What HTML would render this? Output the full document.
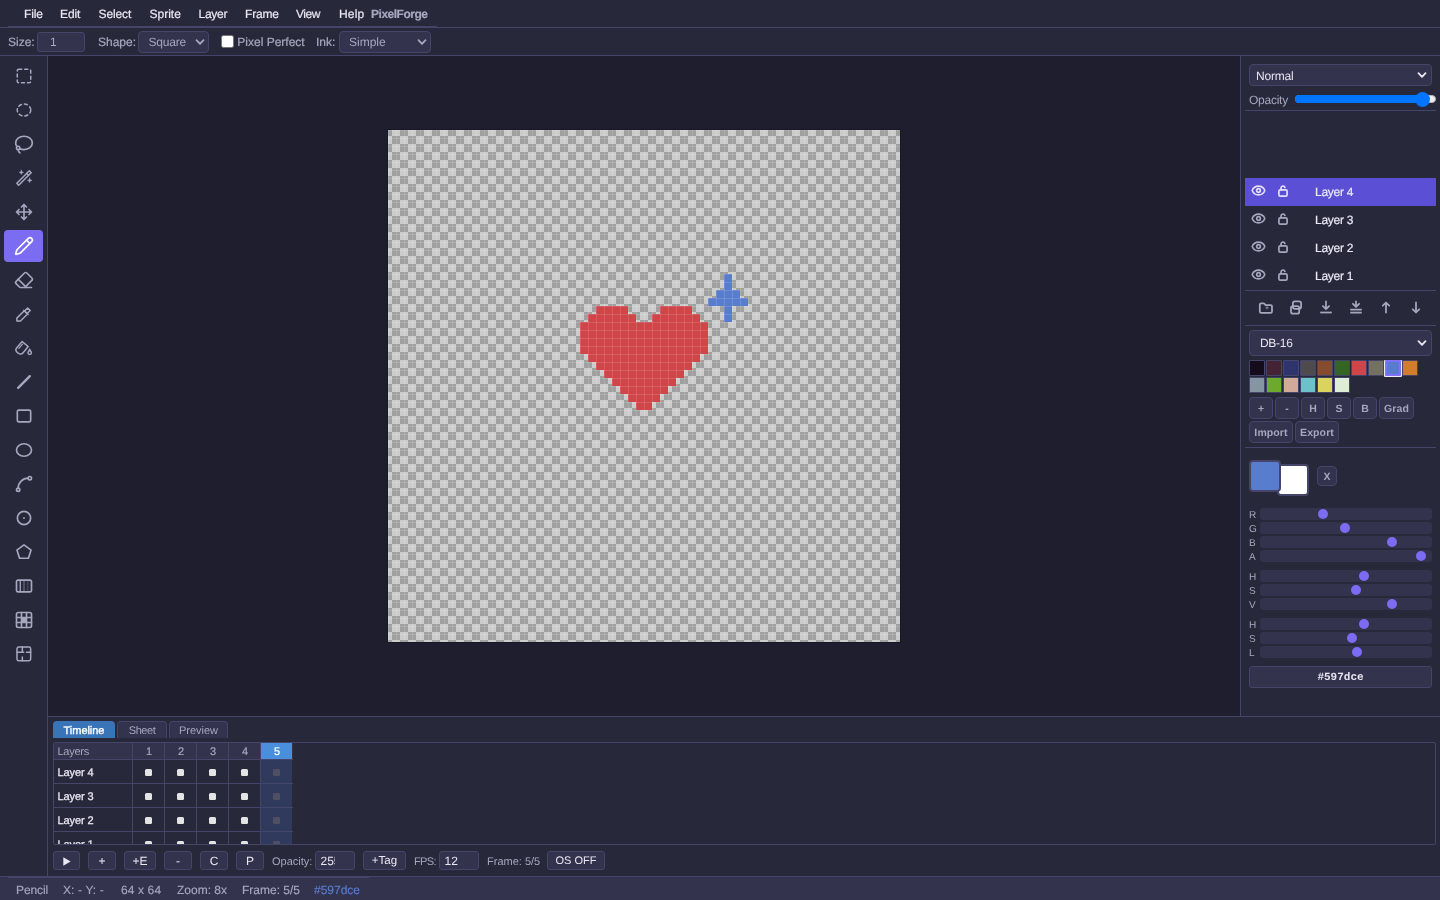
<!DOCTYPE html>
<html><head><meta charset="utf-8">
<style>
*{box-sizing:border-box;margin:0;padding:0}
html,body{width:1440px;height:900px;overflow:hidden;background:#1e1e2e;font-family:"Liberation Sans",sans-serif;font-size:12px;color:#e4e4f0;text-rendering:geometricPrecision}
#menubar,#options,#tools,#right,#bottom,#status,#stage{will-change:transform}
.abs{position:absolute}
#menubar{position:absolute;left:0;top:0;width:1440px;height:28px;background:#28283b}
#menubar{border-bottom:1px solid #45456b}
#menubar .line{position:absolute;left:8px;top:26px;width:429px;height:1px;background:#45456b}
#menubar span{position:absolute;top:7px;line-height:14px;font-size:12px;color:#e8e8f4;white-space:nowrap;-webkit-text-stroke:0.2px}
#options{position:absolute;left:0;top:28px;width:1440px;height:28px;background:#28283b;border-bottom:1px solid #45456b}
#options .lbl{position:absolute;top:7px;line-height:14px;color:#a6a6be;white-space:nowrap;-webkit-text-stroke:0.22px}
.inp{position:absolute;background:#33334d;border:1px solid #45456b;border-radius:3px;color:#e4e4f0}
.sel{position:absolute;background:#33334d;border:1px solid #45456b;border-radius:4px;color:#e4e4f0}
.sel .t{position:absolute;left:7px;top:50%;margin-top:-7px;line-height:14px;white-space:nowrap}
.sel svg{position:absolute;right:4px;top:50%;margin-top:-5px}
#tools{position:absolute;left:0;top:56px;width:48px;height:820px;background:#28283b;border-right:1px solid #45456b}
#tools .tb{position:absolute;left:4px;width:39px;height:32px;border-radius:4px}
#tools .tb svg{position:absolute;left:10px;top:6px;width:20px;height:20px;fill:none;stroke:#a6a6be;stroke-width:2;stroke-linecap:round;stroke-linejoin:round}
#tools .tb.on{background:#7c6cf2}
#tools .tb.on svg{stroke:#fff}
#stage{position:absolute;left:48px;top:56px;width:1192px;height:660px;background:#1e1e2e}
#right{position:absolute;left:1240px;top:56px;width:200px;height:660px;background:#28283b;border-left:1px solid #45456b}
#bottom{position:absolute;left:48px;top:716px;width:1392px;height:160px;background:#28283b;border-top:1px solid #45456b}
#botline{position:absolute;left:0;top:876px;width:1440px;height:1px;background:#45456b}
#status{position:absolute;left:0;top:877px;width:1440px;height:23px;background:#33334d}
#status .line{position:absolute;left:8px;top:0;width:361px;height:1px;background:#45456b}
#status span{position:absolute;top:6px;line-height:14px;color:#a6a6be;white-space:nowrap;-webkit-text-stroke:0.15px}
/*BOTCSS*/
#bottom .mut{color:#a6a6be;white-space:nowrap}
.tab{position:absolute;background:#33334d;border:1px solid #45456b;border-bottom:none;border-radius:4px 4px 0 0;color:#a6a6be;font-size:11px;line-height:18px;text-align:center}
.tab.on{background:#3a74b8;border-color:#3a74b8;color:#fff;-webkit-text-stroke:0.35px #fff}
.tl{position:absolute;border:1px solid #45456b;border-radius:2px;overflow:hidden}
.tl .thead{position:absolute;left:0;top:0;width:239px;height:16px;background:#33334d}
.cbtn{position:absolute;height:19px;background:#33334d;border:1px solid #45456b;border-radius:3px;color:#e8e8f4;font-size:12px;line-height:18.5px;text-align:center;white-space:nowrap}
/*/BOTCSS*//*RIGHTCSS*/
#right .mut{color:#a6a6be;white-space:nowrap}
#right .hr{position:absolute;left:4px;width:191px;height:1px;background:#45456b}
.lrow{position:absolute;left:4px;width:191px;height:28px}
.lrow.on{background:#5b4fd6}
.lrow svg{position:absolute;fill:none;stroke:#a6a6be;stroke-width:2;stroke-linecap:round;stroke-linejoin:round}
.lrow.on svg{stroke:#e4e0fa}
.lrow .eye{left:6px;top:5px;width:15px;height:15px;stroke-width:2.6}
.lrow .lock{left:30px;top:5px;width:16px;height:16px;stroke-width:1.7}
.lrow span{position:absolute;left:70px;top:6.5px;line-height:14px;color:#e8e8f4;white-space:nowrap;letter-spacing:-.28px;-webkit-text-stroke:0.2px}
.act{position:absolute;width:16px;height:16px;fill:none;stroke:#a6a6be;stroke-width:1.75;stroke-linecap:round;stroke-linejoin:round}
.pbtn{position:absolute;background:#33334d;border:1px solid #45456b;border-radius:4px;color:#a6a6be;font-weight:bold;font-size:10.5px;letter-spacing:.1px;text-align:center;white-space:nowrap}
/*/RIGHTCSS*/</style></head><body>
<div id="menubar">
<span style="left:24px;letter-spacing:-.13px">File</span><span style="left:60px;letter-spacing:-.1px">Edit</span><span style="left:98.5px;letter-spacing:-.12px">Select</span><span style="left:149.5px">Sprite</span><span style="left:198.5px;letter-spacing:-.25px">Layer</span><span style="left:245px;letter-spacing:-.18px">Frame</span><span style="left:296px;letter-spacing:-.43px">View</span><span style="left:339px;letter-spacing:.2px">Help</span><span style="left:371px;color:#a6a6be;font-weight:bold;letter-spacing:-.48px">PixelForge</span>
<div class="line"></div>
</div>
<div id="options">
<span class="lbl" style="left:8px">Size:</span>
<div class="inp" style="left:37px;top:4px;width:48px;height:20px"><span class="abs" style="left:12px;top:2px;line-height:14px;color:#a6a6be">1</span></div>
<span class="lbl" style="left:98px">Shape:</span>
<div class="sel" style="left:138px;top:3px;width:71px;height:22px"><span class="t" style="color:#a6a6be;left:9.5px;letter-spacing:-.2px">Square</span><svg width="10" height="10" viewBox="0 0 10 10" style="right:3px"><path d="M1.5 3.2 L5 6.8 L8.5 3.2" fill="none" stroke="#a6a6be" stroke-width="1.8" stroke-linecap="round" stroke-linejoin="round"/></svg></div>
<div class="abs" style="left:221px;top:7px;width:13px;height:13px;background:#fff;border:1px solid #767676;border-radius:2.5px"></div>
<span class="lbl" style="left:237.3px">Pixel Perfect</span>
<span class="lbl" style="left:316px">Ink:</span>
<div class="sel" style="left:339px;top:3px;width:92px;height:22px"><span class="t" style="color:#a6a6be;left:9px">Simple</span><svg width="10" height="10" viewBox="0 0 10 10" style="right:3px"><path d="M1.5 3.2 L5 6.8 L8.5 3.2" fill="none" stroke="#a6a6be" stroke-width="1.8" stroke-linecap="round" stroke-linejoin="round"/></svg></div>
</div>
<div id="tools">
<div class="tb" style="top:4px"><svg viewBox="0 0 24 24"><g transform="translate(1.2 1.2) scale(0.9)"><rect x="3" y="3" width="18" height="18" rx="2" stroke-dasharray="4 4"/></g></svg></div>
<div class="tb" style="top:38px"><svg viewBox="0 0 24 24"><g transform="translate(1.2 1.2) scale(0.9)"><ellipse cx="12" cy="12" rx="9" ry="8" stroke-dasharray="4 4"/></g></svg></div>
<div class="tb" style="top:72px"><svg viewBox="0 0 24 24"><g transform="translate(0 0.7)"><path d="M7 22a5 5 0 0 1-2-4"/><path d="M3.3 14A6.8 6.8 0 0 1 2 10c0-4.4 4.5-8 10-8s10 3.6 10 8-4.5 8-10 8a12 12 0 0 1-5-1"/><path d="M5 18a2 2 0 1 0 0-4 2 2 0 0 0 0 4z"/></g></svg></div>
<div class="tb" style="top:106px"><svg viewBox="0 0 24 24"><path d="M3.4 18.4 18.4 3.4 20.6 5.6 5.6 20.6z" stroke-width="1.8"/><path d="M15.3 6.5l2.2 2.2" stroke-width="1.8"/><path d="M8.8 2.6 9.5 4.5 11.4 5.2 9.5 5.9 8.8 7.8 8.1 5.9 6.2 5.2 8.1 4.5z" fill="#a6a6be" stroke-width="0.6"/><path d="M18.8 12 19.55 14.05 21.6 14.8 19.55 15.55 18.8 17.6 18.05 15.55 16 14.8 18.05 14.05z" fill="#a6a6be" stroke-width="0.6"/></svg></div>
<div class="tb" style="top:140px"><svg viewBox="0 0 24 24"><path d="M12 3v18M9 6l3-3 3 3M9 18l3 3 3-3M3 12h18M6 9l-3 3 3 3M18 9l3 3-3 3"/></svg></div>
<div class="tb on" style="top:174px"><svg viewBox="0 0 24 24"><path d="M21.174 6.812a1 1 0 0 0-3.986-3.987L3.842 16.174a2 2 0 0 0-.5.83l-1.321 4.352a.5.5 0 0 0 .623.622l4.353-1.32a2 2 0 0 0 .83-.497z"/><path d="m15 5 4 4"/></svg></div>
<div class="tb" style="top:208px"><svg viewBox="0 0 24 24"><path d="M21 21H8a2 2 0 0 1-1.42-.587l-3.994-3.999a2 2 0 0 1 0-2.828l10-10a2 2 0 0 1 2.829 0l5.999 6a2 2 0 0 1 0 2.828L12.834 21"/><path d="m5.082 11.09 8.828 8.828"/></svg></div>
<div class="tb" style="top:242px"><svg viewBox="0 0 24 24"><g transform="translate(1.2 1.2) scale(0.9)"><path d="M2.5 21.4V17.5L12.35 7.65 16.7 12 7.3 21.4z"/><path d="M12.75 8.05 16.9 3.9 20.3 7.3 16.15 11.45"/><path d="M11.65 6.95 17.4 12.7"/></g></svg></div>
<div class="tb" style="top:276px"><svg viewBox="0 0 24 24"><g transform="translate(1.2 1.2) scale(0.9)"><g transform="rotate(40 8.6 12.6)"><path d="M3.3 4.9h10.6v11a4.3 4.3 0 0 1-4.3 4.3h-2a4.3 4.3 0 0 1-4.3-4.3z"/><path d="M6.0 7.3v7.5" stroke-width="1.6"/></g><path d="M21.9 18.3a2.3 2.3 0 1 1-4.6 0c0-1.8 1.95-2.7 2.3-4.5 .35 1.8 2.3 2.7 2.3 4.5Z"/></g></svg></div>
<div class="tb" style="top:310px"><svg viewBox="0 0 24 24"><path d="M5 19L19 5" stroke-width="2.9"/></svg></div>
<div class="tb" style="top:344px"><svg viewBox="0 0 24 24"><rect x="4" y="5" width="16" height="14" rx="1.5"/></svg></div>
<div class="tb" style="top:378px"><svg viewBox="0 0 24 24"><ellipse cx="12" cy="12" rx="9" ry="7.5"/></svg></div>
<div class="tb" style="top:412px"><svg viewBox="0 0 24 24"><circle cx="19" cy="5" r="2"/><circle cx="5" cy="19" r="2"/><path d="M5 17A12 12 0 0 1 17 5"/></svg></div>
<div class="tb" style="top:446px"><svg viewBox="0 0 24 24"><circle cx="12" cy="12" r="8"/><circle cx="12" cy="12" r="1.1" fill="#a6a6be" stroke="none"/></svg></div>
<div class="tb" style="top:480px"><svg viewBox="0 0 24 24"><path d="M12 3.5 20.5 9.7 17.3 19.5H6.7L3.5 9.7z"/></svg></div>
<div class="tb" style="top:514px"><svg viewBox="0 0 24 24"><rect x="3" y="5" width="18" height="14" rx="2"/><path d="M7.5 5v14" stroke-width="1.6"/><path d="M12 5v14" opacity=".5" stroke-width="1.6"/><path d="M16.5 5v14" opacity=".25" stroke-width="1.6"/></svg></div>
<div class="tb" style="top:548px"><svg viewBox="0 0 24 24"><rect x="3" y="3" width="18" height="18" rx="2"/><path d="M3 9h18M3 15h18M9 3v18M15 3v18"/><rect x="9" y="9" width="6" height="6" fill="#a6a6be" stroke="none"/></svg></div>
<div class="tb" style="top:582px"><svg viewBox="0 0 24 24"><rect x="3.6" y="3.6" width="16.4" height="16.4" rx="2" stroke-width="1.8"/><path d="M10 3.6v6.4M3.6 10h8M15 10h5M10 15.5v4.5" stroke-width="1.8"/></svg></div>
</div><!--/TOOLS-->
<div id="stage">
<div id="cv" style="position:absolute;left:340px;top:74px;width:512px;height:512px;box-shadow:0 0 0 1px #181824;background-color:#cccccc;background-image:conic-gradient(#a0a0a0 25%,transparent 0 50%,#a0a0a0 0 75%,transparent 0);background-size:16px 16px;background-position:4px -2px">
<svg width="512" height="512" style="position:absolute;left:0;top:0" shape-rendering="crispEdges"><rect x="208" y="176" width="32" height="8" fill="#d04648"/><rect x="272" y="176" width="32" height="8" fill="#d04648"/><rect x="200" y="184" width="48" height="8" fill="#d04648"/><rect x="264" y="184" width="48" height="8" fill="#d04648"/><rect x="192" y="192" width="128" height="8" fill="#d04648"/><rect x="192" y="200" width="128" height="8" fill="#d04648"/><rect x="192" y="208" width="128" height="8" fill="#d04648"/><rect x="192" y="216" width="128" height="8" fill="#d04648"/><rect x="200" y="224" width="112" height="8" fill="#d04648"/><rect x="208" y="232" width="96" height="8" fill="#d04648"/><rect x="216" y="240" width="80" height="8" fill="#d04648"/><rect x="224" y="248" width="64" height="8" fill="#d04648"/><rect x="232" y="256" width="48" height="8" fill="#d04648"/><rect x="240" y="264" width="32" height="8" fill="#d04648"/><rect x="248" y="272" width="16" height="8" fill="#d04648"/><rect x="336" y="144" width="8" height="48" fill="#597dce"/><rect x="320" y="168" width="40" height="8" fill="#597dce"/><rect x="328" y="160" width="24" height="8" fill="#597dce"/></svg>
<div style="position:absolute;left:0;top:0;width:512px;height:512px;background-image:linear-gradient(to right,rgba(255,255,255,.13) 1px,transparent 1px),linear-gradient(to bottom,rgba(255,255,255,.13) 1px,transparent 1px);background-size:8px 8px"></div>
</div>
</div><!--/STAGE-->
<div id="right">
<div class="sel" style="left:8px;top:8px;width:183px;height:22px"><span class="t" style="margin-top:-6px;left:6px;letter-spacing:-.2px">Normal</span><svg width="10" height="10" viewBox="0 0 10 10"><path d="M1.5 3.2 L5 6.8 L8.5 3.2" fill="none" stroke="#e8e8f4" stroke-width="1.8" stroke-linecap="round" stroke-linejoin="round"/></svg></div>
<span class="abs mut" style="left:8px;top:37px;line-height:14px;letter-spacing:-.25px">Opacity</span>
<div class="abs" style="left:54px;top:39px;width:141px;height:8px;border-radius:4px;background:#efefef;border:1px solid #b2b2b2"></div>
<div class="abs" style="left:54px;top:39px;width:128px;height:8px;border-radius:4px;background:#0075ff"></div>
<div class="abs" style="left:173.5px;top:35.5px;width:15px;height:15px;border-radius:8px;background:#0075ff"></div>
<div class="hr" style="top:54px"></div>
<div class="lrow on" style="top:122px"><svg class="eye" viewBox="0 0 24 24"><path d="M2.062 12.348a1 1 0 0 1 0-.696 10.75 10.75 0 0 1 19.876 0 1 1 0 0 1 0 .696 10.75 10.75 0 0 1-19.876 0"/><circle cx="12" cy="12" r="3"/></svg><svg class="lock" viewBox="0 0 16 16"><rect x="3.9" y="6.9" width="8.2" height="6.2" rx="1.4"/><path d="M6 6.9V5a2 2 0 0 1 3.9-0.6"/></svg><span>Layer 4</span></div>
<div class="lrow" style="top:150px"><svg class="eye" viewBox="0 0 24 24"><path d="M2.062 12.348a1 1 0 0 1 0-.696 10.75 10.75 0 0 1 19.876 0 1 1 0 0 1 0 .696 10.75 10.75 0 0 1-19.876 0"/><circle cx="12" cy="12" r="3"/></svg><svg class="lock" viewBox="0 0 16 16"><rect x="3.9" y="6.9" width="8.2" height="6.2" rx="1.4"/><path d="M6 6.9V5a2 2 0 0 1 3.9-0.6"/></svg><span>Layer 3</span></div>
<div class="lrow" style="top:178px"><svg class="eye" viewBox="0 0 24 24"><path d="M2.062 12.348a1 1 0 0 1 0-.696 10.75 10.75 0 0 1 19.876 0 1 1 0 0 1 0 .696 10.75 10.75 0 0 1-19.876 0"/><circle cx="12" cy="12" r="3"/></svg><svg class="lock" viewBox="0 0 16 16"><rect x="3.9" y="6.9" width="8.2" height="6.2" rx="1.4"/><path d="M6 6.9V5a2 2 0 0 1 3.9-0.6"/></svg><span>Layer 2</span></div>
<div class="lrow" style="top:206px"><svg class="eye" viewBox="0 0 24 24"><path d="M2.062 12.348a1 1 0 0 1 0-.696 10.75 10.75 0 0 1 19.876 0 1 1 0 0 1 0 .696 10.75 10.75 0 0 1-19.876 0"/><circle cx="12" cy="12" r="3"/></svg><svg class="lock" viewBox="0 0 16 16"><rect x="3.9" y="6.9" width="8.2" height="6.2" rx="1.4"/><path d="M6 6.9V5a2 2 0 0 1 3.9-0.6"/></svg><span>Layer 1</span></div>
<div class="hr" style="top:234px"></div>
<svg class="act" style="left:17px;top:243.89999999999998px" viewBox="0 0 16 16"><path d="M1.8 4.6a1.3 1.3 0 0 1 1.3-1.3h2.4a1.3 1.3 0 0 1 1 .5l.9 1.1a.6.6 0 0 0 .5.2h4.8a1.3 1.3 0 0 1 1.3 1.3v5.1a1.3 1.3 0 0 1-1.3 1.3H3.1a1.3 1.3 0 0 1-1.3-1.3z"/><path d="M9 6.3v3M7.5 7.8h3" stroke-width="0.9" opacity=".8" stroke-linecap="butt"/></svg>
<svg class="act" style="left:47px;top:243.89999999999998px" viewBox="0 0 16 16"><rect x="4.9" y="1.4" width="8.2" height="7.4" rx="2"/><rect x="3" y="6.1" width="8.2" height="7.6" rx="2"/></svg>
<svg class="act" style="left:77px;top:243.89999999999998px" viewBox="0 0 16 16"><path d="M8 1.4V9.1M4.9 6.1 8 9.2 11.1 6.1"/><path d="M2.2 12.5H13.8" stroke-linecap="butt"/></svg>
<svg class="act" style="left:107px;top:243.89999999999998px" viewBox="0 0 16 16"><path d="M8 1.4V6.7M4.9 3.8 8 6.9 11.1 3.8"/><path d="M2.2 9.5H13.8M2.2 12.5H13.8" stroke-linecap="butt"/></svg>
<svg class="act" style="left:137px;top:243.89999999999998px" viewBox="0 0 16 16"><path d="M8 12.5V2.6M4.8 5.7 8 2.5 11.2 5.7"/></svg>
<svg class="act" style="left:167px;top:243.89999999999998px" viewBox="0 0 16 16"><path d="M8 2.4V12.4M4.8 9.3 8 12.5 11.2 9.3"/></svg>
<div class="hr" style="top:269px"></div>
<div class="sel" style="left:8px;top:274px;width:183px;height:26px"><span class="t" style="left:10px;letter-spacing:-0.3px;margin-top:-7px">DB-16</span><svg width="10" height="10" viewBox="0 0 10 10"><path d="M1.5 3.2 L5 6.8 L8.5 3.2" fill="none" stroke="#e8e8f4" stroke-width="1.8" stroke-linecap="round" stroke-linejoin="round"/></svg></div>
<div class="abs" style="left:8px;top:304px;width:16px;height:16px;background:#140c1c;border:1px solid #45456b;border-radius:1px"></div>
<div class="abs" style="left:25px;top:304px;width:16px;height:16px;background:#442434;border:1px solid #45456b;border-radius:1px"></div>
<div class="abs" style="left:42px;top:304px;width:16px;height:16px;background:#30346d;border:1px solid #45456b;border-radius:1px"></div>
<div class="abs" style="left:59px;top:304px;width:16px;height:16px;background:#4e4a4e;border:1px solid #45456b;border-radius:1px"></div>
<div class="abs" style="left:76px;top:304px;width:16px;height:16px;background:#854c30;border:1px solid #45456b;border-radius:1px"></div>
<div class="abs" style="left:93px;top:304px;width:16px;height:16px;background:#346524;border:1px solid #45456b;border-radius:1px"></div>
<div class="abs" style="left:110px;top:304px;width:16px;height:16px;background:#d04648;border:1px solid #45456b;border-radius:1px"></div>
<div class="abs" style="left:127px;top:304px;width:16px;height:16px;background:#757161;border:1px solid #45456b;border-radius:1px"></div>
<div class="abs" style="left:144px;top:304px;width:16px;height:16px;background:#597dce;border:2px solid #8470ff;border-radius:1px;box-shadow:1px 0 0 #eee,-1px 0 0 #eee,0 1px 0 #eee,1px 1px 0 #eee,-1px 1px 0 #eee"></div>
<div class="abs" style="left:161px;top:304px;width:16px;height:16px;background:#d27d2c;border:1px solid #45456b;border-radius:1px"></div>
<div class="abs" style="left:8px;top:321px;width:16px;height:16px;background:#8595a1;border:1px solid #45456b;border-radius:1px"></div>
<div class="abs" style="left:25px;top:321px;width:16px;height:16px;background:#6daa2c;border:1px solid #45456b;border-radius:1px"></div>
<div class="abs" style="left:42px;top:321px;width:16px;height:16px;background:#d2aa99;border:1px solid #45456b;border-radius:1px"></div>
<div class="abs" style="left:59px;top:321px;width:16px;height:16px;background:#6dc2ca;border:1px solid #45456b;border-radius:1px"></div>
<div class="abs" style="left:76px;top:321px;width:16px;height:16px;background:#dad45e;border:1px solid #45456b;border-radius:1px"></div>
<div class="abs" style="left:93px;top:321px;width:16px;height:16px;background:#deeed6;border:1px solid #45456b;border-radius:1px"></div>
<div class="pbtn" style="left:8px;top:341px;width:24px;height:22px;line-height:22px;">+</div>
<div class="pbtn" style="left:34px;top:341px;width:24px;height:22px;line-height:22px;">-</div>
<div class="pbtn" style="left:60px;top:341px;width:24px;height:22px;line-height:22px;">H</div>
<div class="pbtn" style="left:86px;top:341px;width:24px;height:22px;line-height:22px;">S</div>
<div class="pbtn" style="left:112px;top:341px;width:24px;height:22px;line-height:22px;">B</div>
<div class="pbtn" style="left:138px;top:341px;width:35px;height:22px;line-height:22px;">Grad</div>
<div class="pbtn" style="left:8px;top:365px;width:44px;height:22px;line-height:22px;">Import</div>
<div class="pbtn" style="left:54px;top:365px;width:44px;height:22px;line-height:22px;">Export</div>
<div class="hr" style="top:391px"></div>
<div class="abs" style="left:36px;top:408px;width:32px;height:32px;background:#fff;border:2px solid #45456b;border-radius:4px"></div>
<div class="abs" style="left:8px;top:404px;width:32px;height:32px;background:#597dce;border:2px solid #45456b;border-radius:4px"></div>
<div class="pbtn" style="left:76px;top:410px;width:20px;height:20px;line-height:20px;">X</div>
<span class="abs mut" style="left:8px;top:453.5px;line-height:12px;font-size:10px">R</span>
<div class="abs" style="left:19px;top:452px;width:172px;height:12px;background:#33334d;border-radius:3px"></div>
<div class="abs" style="left:77px;top:453px;width:10px;height:10px;background:#7c6cf2;border-radius:5px"></div>
<span class="abs mut" style="left:8px;top:467.5px;line-height:12px;font-size:10px">G</span>
<div class="abs" style="left:19px;top:466px;width:172px;height:12px;background:#33334d;border-radius:3px"></div>
<div class="abs" style="left:99px;top:467px;width:10px;height:10px;background:#7c6cf2;border-radius:5px"></div>
<span class="abs mut" style="left:8px;top:481.5px;line-height:12px;font-size:10px">B</span>
<div class="abs" style="left:19px;top:480px;width:172px;height:12px;background:#33334d;border-radius:3px"></div>
<div class="abs" style="left:146px;top:481px;width:10px;height:10px;background:#7c6cf2;border-radius:5px"></div>
<span class="abs mut" style="left:8px;top:495.5px;line-height:12px;font-size:10px">A</span>
<div class="abs" style="left:19px;top:494px;width:172px;height:12px;background:#33334d;border-radius:3px"></div>
<div class="abs" style="left:175px;top:495px;width:10px;height:10px;background:#7c6cf2;border-radius:5px"></div>
<span class="abs mut" style="left:8px;top:515.5px;line-height:12px;font-size:10px">H</span>
<div class="abs" style="left:19px;top:514px;width:172px;height:12px;background:#33334d;border-radius:3px"></div>
<div class="abs" style="left:118px;top:515px;width:10px;height:10px;background:#7c6cf2;border-radius:5px"></div>
<span class="abs mut" style="left:8px;top:529.5px;line-height:12px;font-size:10px">S</span>
<div class="abs" style="left:19px;top:528px;width:172px;height:12px;background:#33334d;border-radius:3px"></div>
<div class="abs" style="left:110px;top:529px;width:10px;height:10px;background:#7c6cf2;border-radius:5px"></div>
<span class="abs mut" style="left:8px;top:543.5px;line-height:12px;font-size:10px">V</span>
<div class="abs" style="left:19px;top:542px;width:172px;height:12px;background:#33334d;border-radius:3px"></div>
<div class="abs" style="left:146px;top:543px;width:10px;height:10px;background:#7c6cf2;border-radius:5px"></div>
<span class="abs mut" style="left:8px;top:563.5px;line-height:12px;font-size:10px">H</span>
<div class="abs" style="left:19px;top:562px;width:172px;height:12px;background:#33334d;border-radius:3px"></div>
<div class="abs" style="left:118px;top:563px;width:10px;height:10px;background:#7c6cf2;border-radius:5px"></div>
<span class="abs mut" style="left:8px;top:577.5px;line-height:12px;font-size:10px">S</span>
<div class="abs" style="left:19px;top:576px;width:172px;height:12px;background:#33334d;border-radius:3px"></div>
<div class="abs" style="left:106px;top:577px;width:10px;height:10px;background:#7c6cf2;border-radius:5px"></div>
<span class="abs mut" style="left:8px;top:591.5px;line-height:12px;font-size:10px">L</span>
<div class="abs" style="left:19px;top:590px;width:172px;height:12px;background:#33334d;border-radius:3px"></div>
<div class="abs" style="left:111px;top:591px;width:10px;height:10px;background:#7c6cf2;border-radius:5px"></div>
<div class="inp" style="left:8px;top:610px;width:183px;height:22px;text-align:center;font-family:'Liberation Mono',monospace;font-weight:bold;font-size:11px;line-height:22px;color:#e4e4f0">#597dce</div>
</div><!--/RIGHT-->
<div id="bottom">
<div class="tab on" style="left:5px;top:4px;width:62px;height:17px;letter-spacing:-0.05px">Timeline</div>
<div class="tab" style="left:69px;top:4px;width:50px;height:17px;letter-spacing:-0.45px">Sheet</div>
<div class="tab" style="left:121px;top:4px;width:59px;height:17px;letter-spacing:-0.03px">Preview</div>
<div class="tl" style="left:5px;top:25px;width:1383px;height:103px"><div class="thead"></div><span class="abs mut" style="left:3.5px;top:2px;line-height:14px;font-size:11px;letter-spacing:-.26px">Layers</span><span class="abs" style="left:79px;top:2px;width:32px;text-align:center;line-height:14px;font-size:11px;color:#a6a6be;-webkit-text-stroke:0.2px">1</span><span class="abs" style="left:111px;top:2px;width:32px;text-align:center;line-height:14px;font-size:11px;color:#a6a6be;-webkit-text-stroke:0.2px">2</span><span class="abs" style="left:143px;top:2px;width:32px;text-align:center;line-height:14px;font-size:11px;color:#a6a6be;-webkit-text-stroke:0.2px">3</span><span class="abs" style="left:175px;top:2px;width:32px;text-align:center;line-height:14px;font-size:11px;color:#a6a6be;-webkit-text-stroke:0.2px">4</span><div class="abs" style="left:207px;top:0;width:31px;height:16px;background:#4a8fdb"></div><div class="abs" style="left:207px;top:17px;width:31px;height:90px;background:#2f3a5c"></div><span class="abs" style="left:207px;top:2px;width:32px;text-align:center;line-height:14px;font-size:11px;color:#fff;-webkit-text-stroke:0.2px">5</span><div class="abs" style="left:78px;top:0;width:1px;height:101px;background:#45456b"></div><div class="abs" style="left:110px;top:0;width:1px;height:101px;background:#45456b"></div><div class="abs" style="left:142px;top:0;width:1px;height:101px;background:#45456b"></div><div class="abs" style="left:174px;top:0;width:1px;height:101px;background:#45456b"></div><div class="abs" style="left:206px;top:0;width:1px;height:101px;background:#45456b"></div><div class="abs" style="left:0;top:16px;width:239px;height:1px;background:#45456b"></div><div class="abs" style="left:0;top:40px;width:239px;height:1px;background:#45456b"></div><div class="abs" style="left:0;top:64px;width:239px;height:1px;background:#45456b"></div><div class="abs" style="left:0;top:88px;width:239px;height:1px;background:#45456b"></div><span class="abs" style="left:3.5px;letter-spacing:-.1px;top:23px;line-height:14px;font-size:11px;color:#e8e8f4;white-space:nowrap;-webkit-text-stroke:0.28px #e8e8f4">Layer 4</span><div class="abs" style="left:90.6px;top:25.5px;width:7.4px;height:7.4px;background:#e4e4e4;border-radius:1.5px"></div><div class="abs" style="left:122.6px;top:25.5px;width:7.4px;height:7.4px;background:#e4e4e4;border-radius:1.5px"></div><div class="abs" style="left:154.6px;top:25.5px;width:7.4px;height:7.4px;background:#e4e4e4;border-radius:1.5px"></div><div class="abs" style="left:186.6px;top:25.5px;width:7.4px;height:7.4px;background:#e4e4e4;border-radius:1.5px"></div><div class="abs" style="left:218.6px;top:25.5px;width:7.2px;height:7.2px;background:#504e64;border-radius:1px"></div><span class="abs" style="left:3.5px;letter-spacing:-.1px;top:47px;line-height:14px;font-size:11px;color:#e8e8f4;white-space:nowrap;-webkit-text-stroke:0.28px #e8e8f4">Layer 3</span><div class="abs" style="left:90.6px;top:49.5px;width:7.4px;height:7.4px;background:#e4e4e4;border-radius:1.5px"></div><div class="abs" style="left:122.6px;top:49.5px;width:7.4px;height:7.4px;background:#e4e4e4;border-radius:1.5px"></div><div class="abs" style="left:154.6px;top:49.5px;width:7.4px;height:7.4px;background:#e4e4e4;border-radius:1.5px"></div><div class="abs" style="left:186.6px;top:49.5px;width:7.4px;height:7.4px;background:#e4e4e4;border-radius:1.5px"></div><div class="abs" style="left:218.6px;top:49.5px;width:7.2px;height:7.2px;background:#504e64;border-radius:1px"></div><span class="abs" style="left:3.5px;letter-spacing:-.1px;top:71px;line-height:14px;font-size:11px;color:#e8e8f4;white-space:nowrap;-webkit-text-stroke:0.28px #e8e8f4">Layer 2</span><div class="abs" style="left:90.6px;top:73.5px;width:7.4px;height:7.4px;background:#e4e4e4;border-radius:1.5px"></div><div class="abs" style="left:122.6px;top:73.5px;width:7.4px;height:7.4px;background:#e4e4e4;border-radius:1.5px"></div><div class="abs" style="left:154.6px;top:73.5px;width:7.4px;height:7.4px;background:#e4e4e4;border-radius:1.5px"></div><div class="abs" style="left:186.6px;top:73.5px;width:7.4px;height:7.4px;background:#e4e4e4;border-radius:1.5px"></div><div class="abs" style="left:218.6px;top:73.5px;width:7.2px;height:7.2px;background:#504e64;border-radius:1px"></div><span class="abs" style="left:3.5px;letter-spacing:-.1px;top:95px;line-height:14px;font-size:11px;color:#e8e8f4;white-space:nowrap;-webkit-text-stroke:0.28px #e8e8f4">Layer 1</span><div class="abs" style="left:90.6px;top:97.5px;width:7.4px;height:7.4px;background:#e4e4e4;border-radius:1.5px"></div><div class="abs" style="left:122.6px;top:97.5px;width:7.4px;height:7.4px;background:#e4e4e4;border-radius:1.5px"></div><div class="abs" style="left:154.6px;top:97.5px;width:7.4px;height:7.4px;background:#e4e4e4;border-radius:1.5px"></div><div class="abs" style="left:186.6px;top:97.5px;width:7.4px;height:7.4px;background:#e4e4e4;border-radius:1.5px"></div><div class="abs" style="left:218.6px;top:97.5px;width:7.2px;height:7.2px;background:#504e64;border-radius:1px"></div></div>
<div class="cbtn" style="left:5px;top:134px;width:27px"><svg width="8" height="9" viewBox="0 0 8 9" style="position:absolute;left:9px;top:4.5px"><path d="M0.3 0.3 L7.6 4.5 L0.3 8.7z" fill="#e8e8f4"/></svg></div>
<div class="cbtn" style="left:40px;top:134px;width:28px;">+</div>
<div class="cbtn" style="left:76px;top:134px;width:32px;">+E</div>
<div class="cbtn" style="left:116px;top:134px;width:28px;">-</div>
<div class="cbtn" style="left:152px;top:134px;width:28px;">C</div>
<div class="cbtn" style="left:188px;top:134px;width:28px;">P</div>
<span class="abs mut" style="left:224px;top:138px;line-height:14px;font-size:11px">Opacity:</span>
<div class="inp" style="left:267px;top:134px;width:40px;height:19px"><span class="abs" style="left:4.5px;top:2px;line-height:14px;color:#e8e8f4;width:14.5px;overflow:hidden;white-space:nowrap">255</span></div>
<div class="cbtn" style="left:315px;top:134px;width:43px;font-size:11.5px;line-height:19px">+Tag</div>
<span class="abs mut" style="left:366px;top:138px;line-height:14px;font-size:11px;letter-spacing:-.6px">FPS:</span>
<div class="inp" style="left:391px;top:134px;width:40px;height:19px"><span class="abs" style="left:4.5px;top:2px;line-height:14px;color:#e8e8f4">12</span></div>
<span class="abs mut" style="left:439px;top:138px;line-height:14px;font-size:11px">Frame: 5/5</span>
<div class="cbtn" style="left:499px;top:134px;width:58px;font-size:11px;line-height:18.5px">OS OFF</div>
</div><!--/BOTTOM-->
<div id="botline"></div>
<div id="status">
<div class="line"></div>
<span style="left:16px;letter-spacing:-.1px">Pencil</span><span style="left:63px;letter-spacing:.12px">X: - Y: -</span><span style="left:121px;letter-spacing:.12px">64 x 64</span><span style="left:177px">Zoom: 8x</span><span style="left:242px">Frame: 5/5</span><span style="left:314px;color:#597dce">#597dce</span>
</div>
</body></html>
